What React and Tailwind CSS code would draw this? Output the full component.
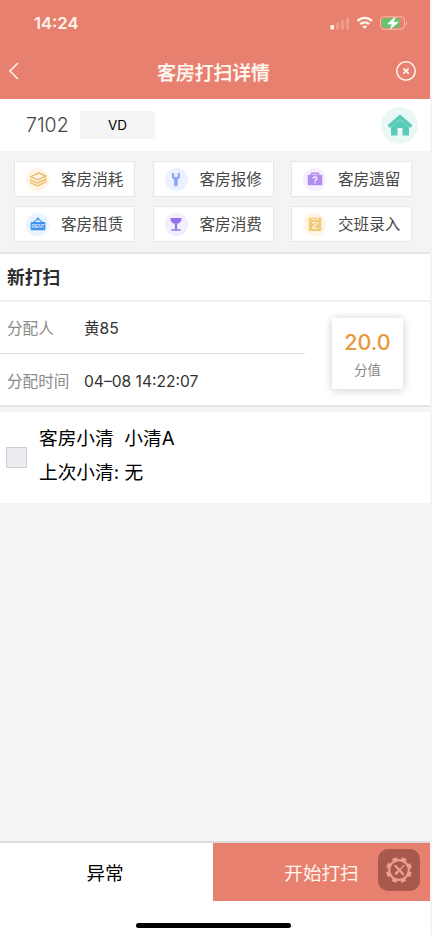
const actions = [
  { label: '客房消耗', icon: LayersGlyph, bg: 'bg-[#fef5e7]' },
  { label: '客房报修', icon: WrenchGlyph, bg: 'bg-[#edf1fe]' },
  { label: '客房遗留', icon: CaseGlyph, bg: 'bg-[#f5effe]' },
  { label: '客房租赁', icon: RentGlyph, bg: 'bg-[#e9f4fe]' },
  { label: '客房消费', icon: GlassGlyph, bg: 'bg-[#f1eefd]' },
  { label: '交班录入', icon: ClipboardGlyph, bg: 'bg-[#fef5e4]' },
]

function LayersGlyph() {
  return (
    <svg viewBox="0 0 24 24" className="size-6 shrink-0" fill="none" stroke="#edbe6e" strokeWidth="1.4" strokeLinejoin="round" strokeLinecap="round">
      <path d="M4.5 9.6 12.8 6l7 2.8-8 4z" />
      <path d="M4.5 12.2c0 .6.3.9.8 1.1l6.5 2.7 8-4v-1M4.5 15c0 .6.3.9.8 1.1l6.5 2.7 8-4v-1" />
    </svg>
  )
}

function WrenchGlyph() {
  return (
    <svg viewBox="0 0 24 24" className="size-6 shrink-0" fill="none" stroke="#8fa3f3">
      <path d="M9 6v3.2c0 1.2 1.2 2.3 2.900 2.300s2.900-1.100 2.900-2.300V6" strokeWidth="2.2" />
      <path d="M11.900 11.500v6.200" strokeWidth="3.600" strokeLinecap="round" />
    </svg>
  )
}

function CaseGlyph() {
  return (
    <svg viewBox="0 0 24 24" className="size-6 shrink-0">
      <path d="M8.5 8V6.2h7V8" fill="none" stroke="#b18cf2" strokeWidth="1.4" />
      <rect x="4.8" y="7.7" width="14.4" height="10.6" rx="1" fill="#b18cf2" />
      <path d="M10.2 11.6c0-2.3 3.7-2.2 3.7 0 0 1.3-1.8 1.2-1.8 2.6M12.1 15.3v1.3" fill="none" stroke="#fff" strokeWidth="1.2" />
    </svg>
  )
}

function RentGlyph() {
  return (
    <svg viewBox="0 0 24 24" className="size-6 shrink-0">
      <path d="M7.5 10 12 7l4.5 3" fill="none" stroke="#4d9df2" strokeWidth="1.2" />
      <circle cx="12" cy="7" r="1.4" fill="#4d9df2" />
      <rect x="4.6" y="9.9" width="14.8" height="8.4" rx="1" fill="#4391f0" />
      <text x="12" y="15.8" textAnchor="middle" fontSize="4.8" fill="#fff" fontFamily="Liberation Sans, sans-serif">RENT</text>
    </svg>
  )
}

function GlassGlyph() {
  return (
    <svg viewBox="0 0 24 24" className="size-6 shrink-0" fill="#9673ed">
      <path d="M6.3 6h11.4c0 3.4-1.9 5.3-4.6 5.8v5.4h3.4v1.5H7.5v-1.5h3.4v-5.4C8.2 11.3 6.3 9.4 6.3 6z" />
    </svg>
  )
}

function ClipboardGlyph() {
  return (
    <svg viewBox="0 0 24 24" className="size-6 shrink-0">
      <rect x="5.8" y="5.6" width="12.4" height="13.4" rx="1" fill="#f1c97b" />
      <path d="M8.8 5.3v2h6.4v-2" fill="none" stroke="#fff7e8" strokeWidth=".8" />
      <path d="M9 10.6h3.5M9.8 15.6l5.3-5M9.3 16.3h5.5" fill="none" stroke="#fff7e8" strokeWidth="1.1" />
    </svg>
  )
}

function StatusBar() {
  return (
    <div className="flex h-[45px] items-center justify-between pl-[34px] pr-[22px]">
      <span className="pt-0.5 font-['Inter'] text-[16.6px] font-semibold leading-none text-[#fff3e8]">14:24</span>
      <svg viewBox="0 0 78 16" className="h-4 w-[78px]">
        <g fill="#fff7ee">
          <rect x="0.5" y="10" width="3.5" height="4.5" rx="1" />
          <g opacity=".22">
            <rect x="6" y="7.5" width="3.3" height="7" rx="1" />
            <rect x="11" y="5" width="3.3" height="9.5" rx="1" />
            <rect x="16" y="2.5" width="3.3" height="12" rx="1" />
          </g>
        </g>
        <g fill="none" stroke="#fff7ee" strokeWidth="2.4">
          <path d="M27.5 6c4-4.2 10.5-4.2 14.5 0M30.3 9.2c2.5-2.5 6.4-2.5 8.9 0" />
        </g>
        <path d="M32.3 11.4c1.5-1.2 3.4-1.2 4.9 0l-2.45 2.7z" fill="#fff7ee" />
        <rect x="50.5" y="1.8" width="24" height="12.4" rx="3.5" fill="none" stroke="#f6bfa9" />
        <rect x="52" y="3.3" width="17.5" height="9.4" rx="2" fill="#62c66c" />
        <path d="M76 6.2c1.6.6 1.6 3.4 0 4z" fill="#f6bfa9" />
        <path d="M65 2 57.5 9h4.7L60.5 14l7.7-6.8h-4.7z" fill="#fff" stroke="#fff" strokeWidth=".6" />
      </svg>
    </div>
  )
}

function Header() {
  return (
    <header className="h-[99px] bg-[#e8806f] text-[#fff8f2]">
      <StatusBar />
      <div className="flex h-[54px] items-center justify-between pl-2 pr-[13px]">
        <svg viewBox="0 0 12 20" className="h-5 w-6 -translate-x-1.5 -translate-y-px" fill="none" stroke="currentColor" strokeWidth="1.5">
          <path d="M10 2 2 10l8 8" />
        </svg>
        <h1 className="translate-y-0.5 text-[18.8px] font-medium [-webkit-text-stroke:0.25px_currentColor]">客房打扫详情</h1>
        <svg viewBox="0 0 22 22" className="size-[22px] -translate-y-px" fill="none" stroke="currentColor" strokeWidth="1.5">
          <circle cx="11" cy="11" r="9.2" />
          <path d="m8.3 8.3 5.4 5.4m0-5.4-5.4 5.4" strokeWidth="1.7" />
        </svg>
      </div>
    </header>
  )
}

function ActionButton({ label, icon: Icon, bg }) {
  return (
    <button className="flex items-center border border-[#e7e7e7] bg-white pl-[11px] text-[15.6px] text-[#484848]">
      <span className={`mr-3 flex size-[23px] items-center justify-center rounded-full ${bg}`}>
        <Icon />
      </span>
      <span className="pt-0.5">{label}</span>
    </button>
  )
}

function ToolButton() {
  return (
    <div className="absolute right-[10px] top-[6px] flex size-[42px] items-center justify-center rounded-[10px] bg-[#a8594e]">
      <svg viewBox="0 0 28 28" className="size-7" fill="none" stroke="#ef9d8c">
        <circle cx="14" cy="14" r="9.8" strokeWidth="2.2" />
        <circle cx="14" cy="14" r="11.5" strokeWidth="3" strokeDasharray="4.8 4.232" strokeDashoffset="-2.1" />
        <path d="m10.5 10 7.5 8" strokeWidth="2.4" strokeLinecap="round" />
        <path d="m19 9.5-5 5" strokeWidth="1.3" strokeLinecap="round" />
        <path d="m12.5 16-1.5 1.5" strokeWidth="2.6" strokeLinecap="round" />
      </svg>
    </div>
  )
}

export default function App() {
  return (
    <div className="h-[935px] w-[432px] bg-[#f4f4f4] font-['Inter','Noto_Sans_CJK_SC',sans-serif]">
      <div className="flex h-full w-[430px] flex-col">
        <Header />

        {/* Room */}
        <div className="flex h-[52px] items-center bg-white pl-[26px] pr-3">
          <span className="w-[54px] pt-px text-[19.5px] font-light text-[#444]">7102</span>
          <span className="flex h-7 w-[75px] items-center justify-center bg-[#f4f4f4] text-[13.5px] text-black">VD</span>
          <div className="ml-auto flex size-[37px] items-center justify-center rounded-full bg-[#e9f8f5]">
            <svg viewBox="0 0 26 24" className="h-6 w-[26px]">
              <path d="M4 11 13 4l9 7v11.5h-6.5V15h-5v7.5H4z" fill="#58cbb6" />
              <path d="M1.5 13.5 13 3.5l11.5 10" fill="none" stroke="#58cbb6" strokeWidth="3" />
              <path d="M3.5 14.5 13 6.3l9.5 8.2" fill="none" stroke="#8ee0d1" strokeWidth=".8" />
            </svg>
          </div>
        </div>

        {/* Actions */}
        <div className="grid h-[101px] grid-cols-[121px_121px_121px] grid-rows-[36px_36px] gap-x-[17.5px] gap-y-[9px] pl-[14px] pt-[10px]">
          {actions.map((action) => (
            <ActionButton key={action.label} {...action} />
          ))}
        </div>

        {/* Assignment */}
        <section className="h-[155px] border-y-2 border-[#e5e5e5] bg-white">
          <h2 className="flex h-12 items-center border-b-2 border-[#f0f0f0] pl-[7px] pt-[3px] text-[17.8px] font-bold text-[#2d2d2d]">新打扫</h2>
          <div className="flex justify-between">
            <dl className="w-[305px] text-[15.6px] text-[#333]">
              <div className="flex h-[52px] items-center border-b border-[#dedede] pl-[7px] pt-[3px]">
                <dt className="w-[77px] text-[#8a8a8a]">分配人</dt>
                <dd>黄85</dd>
              </div>
              <div className="flex h-[51px] items-center pl-[7px] pt-1">
                <dt className="w-[77px] text-[#8a8a8a]">分配时间</dt>
                <dd>04–08 14:22:07</dd>
              </div>
            </dl>
            <div className="mr-[27px] mt-4 flex size-[71px] flex-col items-center justify-center bg-white shadow-[0_1px_9px_rgba(0,0,0,0.2)]">
              <span className="text-[21.5px] font-medium leading-7 text-[#e9983a]">20.0</span>
              <span className="mt-1 text-[13.3px] leading-5 text-[#888]">分值</span>
            </div>
          </div>
        </section>

        {/* Task */}
        <label className="mt-[5px] flex h-[91px] items-center bg-white pl-1.5 text-[18.7px] text-black">
          <span className="mr-3 size-[21px] border border-[#cdcfd2] bg-[#ebecef]" />
          <span className="pb-1 leading-[34px]">
            <span className="block whitespace-pre">客房小清  小清A</span>
            <span className="block">上次小清: 无</span>
          </span>
        </label>

        {/* Footer */}
        <footer className="mt-auto h-[94px] border-t-2 border-[#dedede] bg-white">
          <div className="relative flex h-[58px] text-[18.6px]">
            <button className="w-[213px] pr-[3px] pt-[3px] text-black">异常</button>
            <button className="flex-1 bg-[#e8806f] pt-[3px] text-[#fff6ec]">开始打扫</button>
            <ToolButton />
          </div>
          <div className="ml-[136px] mt-[22px] h-[5px] w-[155px] rounded-full bg-black" />
        </footer>
      </div>
    </div>
  )
}
